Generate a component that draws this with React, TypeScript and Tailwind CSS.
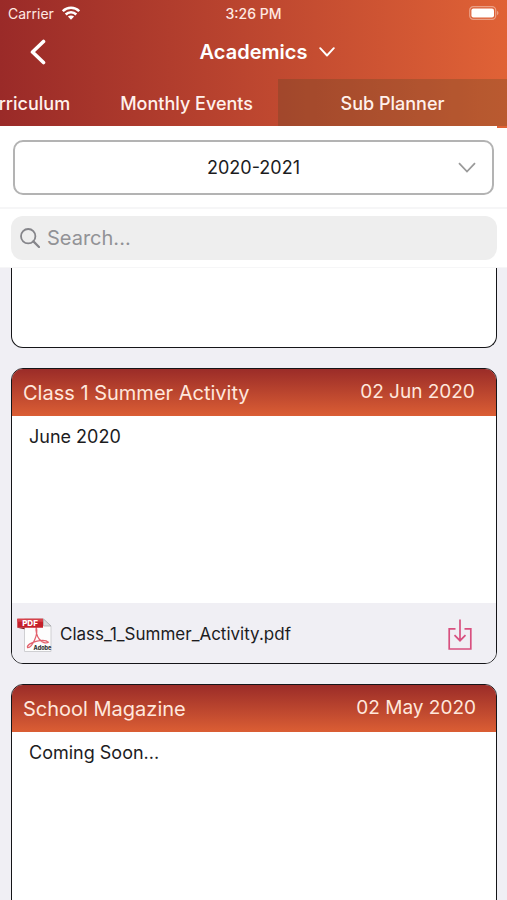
import { useState } from 'react';

interface PlannerItem {
  id: number;
  title: string;
  date: string;
  body: string;
  file?: string;
}

const tabs = ['Curriculum', 'Monthly Events', 'Sub Planner'];

const items: PlannerItem[] = [
  { id: 1, title: 'Class 1 Summer Activity', date: '02 Jun 2020', body: 'June 2020', file: 'Class_1_Summer_Activity.pdf' },
  { id: 2, title: 'School Magazine', date: '02 May 2020', body: 'Coming Soon...' },
];

function StatusBar() {
  return (
    <div className="grid h-7 grid-cols-3 items-center px-2 pb-0.5 text-[14px] text-[#ffe9e2]">
      <div className="flex items-center gap-2">
        <span>Carrier</span>
        <svg viewBox="0 0 18 14" className="h-3.5 w-[18px]" fill="none" stroke="#fff" strokeWidth="2.5">
          <path d="M0.8 5.2C5.3 0.6 12.7 0.6 17.2 5.2" />
          <path d="M3.7 8.5C6.7 5.5 11.3 5.5 14.3 8.5" />
          <path d="M9 13.8 5.9 10.6C7.7 9 10.3 9 12.1 10.6Z" fill="#fff" stroke="none" />
        </svg>
      </div>
      <span className="text-center font-medium">3:26 PM</span>
      <svg viewBox="0 0 30 14" className="h-3.5 w-[30px] justify-self-end">
        <rect x="0.7" y="0.7" width="26" height="12.6" rx="3.6" fill="none" stroke="#fff" strokeOpacity="0.4" strokeWidth="1.2" />
        <rect x="2.4" y="2.4" width="22.6" height="9.2" rx="2" fill="#fff" />
        <path d="M28 4.8C30 5.6 30 8.4 28 9.2Z" fill="#fff" fillOpacity="0.4" />
      </svg>
    </div>
  );
}

function PdfIcon() {
  return (
    <svg viewBox="0 0 36 36" className="h-9 w-9 shrink-0">
      <path d="M7.5 2H26.500l7.500 7v25.500h-26.500z" fill="#fdfdfd" stroke="#cfcfd2" />
      <path d="M26.500 2v7h7.500z" fill="#dcdcde" stroke="#a9a9ad" strokeWidth="0.8" />
      <path
        d="M19.300 10.500C20.300 14 19.800 18 17.800 22.500C15.800 27 13 31 10.600 30.600C9.500 28.500 14 25.500 19 24.300C24 23.200 29.500 23.200 31.300 25.200C29 26.800 25 25.500 22.500 22.500C20 19.500 18.300 14 19.300 10.500"
        fill="none"
        stroke="#e2626e"
        strokeWidth="1.3"
      />
      <path d="M0.3 1.700h25.700v9H0.300z" fill="#c5202a" />
      <path d="M0.3 1.700h25.700v3H0.300z" fill="#d8414a" />
      <path d="M0.3 10.700h7.200v1.500z" fill="#7f1218" />
      <text x="13" y="9.200" textAnchor="middle" fontSize="8" fontWeight="800" fill="#fff">PDF</text>
      <text x="25.500" y="33" textAnchor="middle" fontSize="5.500" fontWeight="800" fill="#333">Adobe</text>
    </svg>
  );
}

function PlannerCard({ item }: { item: PlannerItem }) {
  return (
    <article className="flex h-[296px] shrink-0 flex-col overflow-hidden rounded-xl border border-[#151518] bg-white">
      <header className="flex h-[47px] shrink-0 items-center justify-between bg-linear-to-b from-[#9b2c28] to-[#db5e34] pl-[11px] pr-5 text-[#ffe7dc]">
        <h2 className="text-[20px]">{item.title}</h2>
        <time className="min-w-[117px] text-center text-[19px]">{item.date}</time>
      </header>
      <p className="flex-1 px-[17px] pt-[7px] text-[18px] leading-7 text-[#1c1c1e]">{item.body}</p>
      {item.file && (
        <div className="flex h-[60px] shrink-0 items-center gap-[7px] bg-[#f0eff4] pl-[5px] pr-6 pt-[3px]">
          <PdfIcon />
          <span className="flex-1 text-[17px] text-[#1c1c1e]">{item.file}</span>
          <button type="button" aria-label={`Download ${item.file}`}>
            <svg viewBox="0 0 24 32" className="h-8 w-6" fill="none" stroke="#d8507f" strokeWidth="1.7">
              <path d="M7.500 9.800H1.200V30H22.800V9.800H16.500" />
              <path d="M12 0.500v21M6.500 16.200l5.500 5.500 5.500-5.500" />
            </svg>
          </button>
        </div>
      )}
    </article>
  );
}

export default function App() {
  const [activeTab, setActiveTab] = useState('Sub Planner');
  const [query, setQuery] = useState('');

  return (
    <div className="flex h-screen flex-col overflow-hidden bg-[#f0eff4] font-['Inter','Liberation_Sans',sans-serif]">
      <div className="shrink-0 bg-linear-to-r from-[#9a2a28] to-[#e06236]">
        <StatusBar />
        <div className="grid h-[51px] grid-cols-[80px_1fr_80px] items-center pb-[3px] text-white">
          <button type="button" aria-label="Back" className="pl-[30px]">
            <svg viewBox="0 0 16 26" className="h-[26px] w-4" fill="none" stroke="currentColor" strokeWidth="3.6" strokeLinecap="round" strokeLinejoin="round">
              <path d="M13.500 2.500 2.500 13 13.500 23.500" />
            </svg>
          </button>
          <button type="button" className="flex items-center justify-center gap-3 pl-7 text-[20px] font-semibold">
            Academics
            <svg viewBox="0 0 16 10" className="h-2.5 w-4" fill="none" stroke="currentColor" strokeWidth="1.900" strokeLinecap="round" strokeLinejoin="round">
              <path d="M1.200 1.200 8 8.500 14.800 1.200" />
            </svg>
          </button>
        </div>
        <nav className="flex h-[47px] justify-end overflow-hidden">
          {tabs.map((tab) => (
            <button
              key={tab}
              type="button"
              onClick={() => setActiveTab(tab)}
              className={`shrink-0 px-[25px] pt-0.5 text-[18px] font-medium text-[#fff1ec] last:min-w-[229px] ${activeTab === tab ? 'bg-[#47441f]/25' : ''}`}
            >
              {tab}
            </button>
          ))}
        </nav>
        <div className="pr-2.5">
          <div className="h-0.5 bg-white" />
        </div>
      </div>

      <div className="relative shrink-0 border-b-2 border-[#f6f6f7] bg-white px-[13px] py-3">
        <select
          aria-label="Academic year"
          defaultValue="2020-2021"
          className="block h-[55px] w-full appearance-none rounded-[10px] border-2 border-[#b3b3b3] bg-white text-center text-[18px] text-[#1c1c1e]"
        >
          <option>2020-2021</option>
          <option>2019-2020</option>
        </select>
        <svg viewBox="0 0 18 11" className="pointer-events-none absolute right-[31px] top-[34px] h-[11px] w-[18px]" fill="none" stroke="#9a9a9a" strokeWidth="1.800">
          <path d="M1 1.200 9 9.500 17 1.200" />
        </svg>
      </div>

      <div className="shrink-0 border-b border-[#f6f6f7] bg-white pl-[11px] pr-2.5 py-[7px]">
        <label className="flex h-11 items-center gap-[7px] rounded-xl bg-[#eeeeee] px-[9px]">
          <svg viewBox="0 0 20 20" className="h-5 w-5 shrink-0" fill="none" stroke="#85858a" strokeWidth="1.800">
            <circle cx="8.200" cy="8.200" r="7.200" />
            <path d="M13.400 13.400 19 19" strokeWidth="2.200" strokeLinecap="round" />
          </svg>
          <input
            type="text"
            aria-label="Search"
            placeholder="Search..."
            value={query}
            onChange={(e) => setQuery(e.target.value)}
            className="min-w-0 flex-1 bg-transparent text-[20px] outline-none placeholder:text-[#929296]"
          />
        </label>
      </div>

      <main className="flex min-h-0 flex-1 flex-col gap-5 overflow-hidden pl-[11px] pr-2.5">
        <div className="h-20 shrink-0 rounded-b-xl border border-t-0 border-[#151518] bg-white" />
        {items.map((item) => (
          <PlannerCard key={item.id} item={item} />
        ))}
      </main>
    </div>
  );
}
